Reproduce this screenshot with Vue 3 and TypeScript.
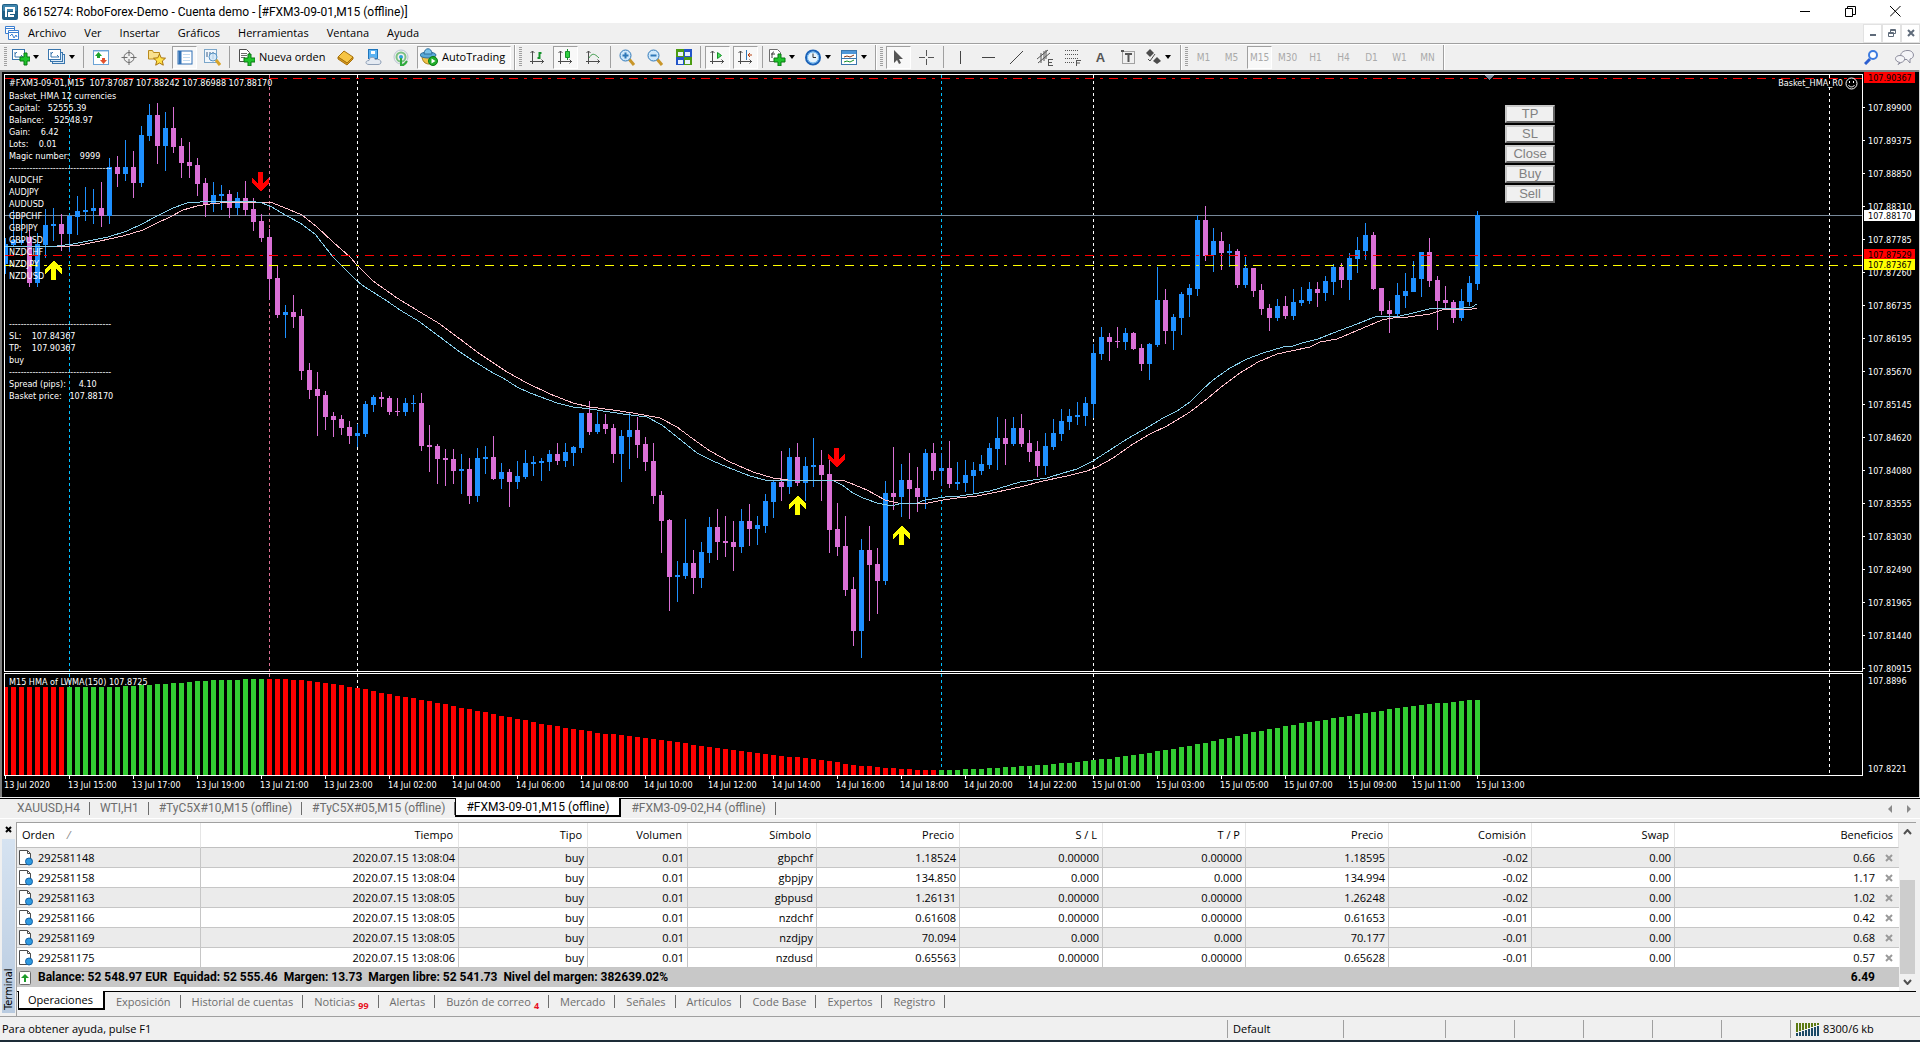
<script setup lang="ts">
interface Candle { x: number; up: boolean; high: number; top: number; bottom: number; low: number }
interface Mark { x: number; y: number; up: boolean }

const STEP = 8
const FIRST = 5

// direction, wick top, body top, body bottom, wick bottom
const candleSource = `
B 238 244 264 274;B 210 240 245 247;B 218 240 243 245;P 230 237 283 287;B 233 244 283 287;B 209 225 245 258;B 208 224 226 241;P 214 224 234 251;
B 215 216 234 252;B 196 211 217 235;B 187 210 212 221;B 189 208 211 224;P 182 208 216 227;B 158 167 216 224;P 156 167 174 187;B 140 167 174 181;
P 151 167 183 198;B 126 135 183 187;B 104 115 136 141;P 103 115 146 164;B 112 128 146 171;P 107 128 147 153;P 138 146 163 178;P 142 162 166 178;
P 158 165 184 196;P 178 183 204 217;B 182 195 204 212;B 185 194 196 210;P 190 194 208 218;B 192 198 208 215;P 181 198 210 216;P 198 209 222 231;
P 214 221 238 242;P 229 237 279 300;P 265 278 315 318;B 305 312 315 338;P 295 312 317 328;P 309 316 371 380;P 363 370 390 399;P 372 389 396 436;
P 391 395 417 430;P 412 416 420 437;P 415 419 428 435;P 421 427 436 444;B 424 433 436 447;B 401 404 434 437;B 395 397 405 412;P 392 397 399 407;
P 396 398 412 415;P 398 411 412 416;B 398 403 412 416;B 395 403 404 412;P 393 403 446 451;P 425 445 447 472;P 444 446 459 484;P 449 458 460 486;
P 449 459 471 484;B 454 469 471 494;P 458 469 496 504;B 448 458 496 502;B 446 457 459 474;P 436 457 479 480;B 463 472 479 489;P 469 472 482 507;
B 461 476 482 489;B 450 463 477 479;B 456 462 464 476;B 458 461 463 481;B 450 454 462 471;P 443 454 461 465;B 443 452 461 467;B 446 447 453 466;
B 413 413 448 453;P 401 413 432 435;B 412 424 432 434;P 414 424 429 434;P 424 428 454 463;B 430 436 454 482;B 413 430 437 469;P 417 430 445 458;
P 437 444 462 471;P 443 461 496 504;P 491 495 521 553;P 519 520 577 611;B 561 575 577 602;B 519 563 576 579;P 550 563 578 594;B 542 552 578 588;
B 517 527 553 563;P 509 527 542 560;P 516 541 543 557;P 521 542 547 571;B 509 521 547 553;P 504 521 529 546;B 516 525 529 545;B 494 501 526 533;
B 481 482 502 518;P 451 482 487 501;B 448 457 487 494;P 443 457 483 486;B 457 466 483 501;B 438 465 467 487;P 450 465 475 501;P 457 474 530 553;
P 503 529 547 556;P 516 546 590 596;P 577 589 631 646;B 539 550 631 658;P 526 550 565 621;P 548 564 581 614;B 481 493 581 585;P 447 493 497 510;
B 464 480 497 517;P 453 480 489 519;P 467 488 497 512;B 449 453 497 509;P 443 453 471 480;B 453 468 471 486;P 441 468 484 488;B 462 482 484 490;
B 460 475 483 492;B 462 470 476 493;B 455 464 471 475;B 443 448 465 469;B 417 438 449 470;P 419 438 444 465;B 417 428 444 446;P 414 428 444 447;
P 430 443 452 462;P 441 451 466 477;B 433 446 466 475;B 419 433 447 450;B 409 421 434 441;B 409 416 422 430;B 402 415 417 425;B 397 403 416 426;
B 344 353 404 418;B 327 337 354 360;P 333 337 342 361;P 327 341 342 348;B 328 333 342 350;P 332 333 349 350;P 344 348 364 371;B 343 344 364 380;
B 267 300 345 347;P 289 300 331 344;B 314 317 331 350;B 292 294 318 335;B 284 288 295 317;B 215 220 289 296;P 206 220 256 261;B 228 241 255 272;
P 232 241 253 270;B 244 251 253 267;P 249 251 285 288;B 257 268 285 288;P 268 268 291 297;P 284 290 309 315;P 304 308 318 331;B 299 306 318 321;
P 296 306 316 319;B 289 302 316 320;B 287 300 303 306;B 282 289 301 304;P 282 289 293 307;B 276 281 293 301;B 264 267 282 295;P 263 267 280 288;
B 253 258 280 300;B 237 250 259 273;B 223 235 251 260;P 232 235 289 290;P 288 288 311 315;P 301 310 314 333;B 283 295 314 316;B 273 291 296 308;
B 261 278 292 292;B 252 252 279 297;P 238 252 281 287;P 276 280 301 330;P 286 300 303 308;P 300 302 318 323;B 289 301 318 321;B 276 283 302 306;
B 211 215 284 290`

const candles: Candle[] = candleSource.trim().split(';').map((row, i) => {
  const [dir, high, top, bottom, low] = row.trim().split(' ')
  return { x: FIRST + i * STEP, up: dir === 'B', high: +high, top: +top, bottom: +bottom, low: +low }
})

const fastLine = '5,246 57,246 73,244 88,241 108,237 127,231 142,224 157,216 173,208 187,203 200,202 215,201 250,201 262,203 272,207 285,215 300,223 315,234 333,257 357,281 365,287 387,301 400,310 420,322 440,337 460,352 472,360 493,373 503,378 517,387 530,393 557,403 573,407 590,409 610,412 623,414 647,417 662,425 677,437 697,453 713,461 727,467 750,476 765,480 832,480 842,485 853,493 863,498 877,503 887,505 895,505 902,503 917,503 925,500 945,497 960,496 973,494 990,491 1000,488 1020,482 1047,478 1063,473 1077,469 1093,461 1110,450 1127,439 1150,426 1163,418 1177,411 1190,402 1202,390 1213,380 1230,368 1247,359 1263,353 1283,347 1293,346 1302,343 1318,339 1333,333 1357,324 1372,318 1378,316 1400,316 1413,313 1433,308 1463,308 1472,307 1477,304'
const slowLine = '5,246 70,246 80,245 100,241 123,236 143,230 157,223 170,217 183,210 197,206 210,204 230,202 270,202 283,207 302,215 317,227 333,242 350,257 357,265 373,281 397,298 420,312 440,324 460,339 480,354 489,360 507,372 527,383 550,394 573,403 590,407 613,410 633,413 660,418 677,427 693,439 710,451 730,462 753,472 773,478 788,480 842,480 850,483 867,490 885,500 898,503 928,503 943,500 957,498 977,496 997,492 1020,487 1043,481 1067,476 1087,471 1097,467 1113,458 1133,444 1150,434 1167,426 1190,412 1208,398 1220,388 1240,373 1258,362 1277,354 1310,347 1320,342 1337,339 1363,328 1382,320 1393,318 1408,317 1430,314 1445,309 1472,309 1477,308'

const histogramTops: number[] = [
  687, 687, 687, 687, 687, 687, 687, 687, 687, 687, 687, 687, 687, 687, 687, 686, 686, 685, 685, 684, 684, 683, 683, 682,
  681, 681, 680, 680, 680, 680, 679, 679, 679, 679, 679, 679, 680, 680, 681, 682, 683, 684, 685, 687, 688, 689, 691, 693,
  694, 696, 697, 698, 700, 701, 703, 704, 706, 708, 709, 711, 712, 714, 716, 717, 719, 720, 722, 724, 725, 726, 728, 729,
  730, 731, 733, 734, 734, 735, 736, 737, 738, 739, 740, 741, 742, 743, 745, 746, 747, 748, 749, 750, 751, 752, 753, 754,
  755, 756, 757, 757, 758, 759, 760, 761, 762, 764, 765, 766, 766, 767, 768, 768, 769, 769, 770, 770, 770, 770, 770, 770,
  769, 769, 769, 768, 768, 767, 767, 766, 766, 765, 765, 764, 763, 763, 762, 761, 760, 759, 759, 757, 756, 755, 754, 753,
  751, 750, 749, 747, 746, 744, 743, 741, 739, 738, 736, 734, 732, 731, 729, 728, 726, 725, 723, 722, 721, 720, 718, 717,
  716, 714, 713, 712, 711, 709, 708, 707, 706, 705, 704, 703, 703, 702, 701, 700, 700,
]
const histogram = histogramTops.map((y, i) => ({
  x: FIRST + i * STEP - 2,
  y,
  rising: (i >= 8 && i <= 32) || i >= 117,
}))

const separators = [
  { x: 69, color: '#00bfff' }, { x: 269, color: '#db7093' }, { x: 357, color: '#ffffff' },
  { x: 941, color: '#00bfff' }, { x: 1093, color: '#ffffff' }, { x: 1829, color: '#ffffff' },
]
const marks: Mark[] = [
  { x: 260, y: 191, up: false }, { x: 53, y: 261, up: true }, { x: 797, y: 496, up: true },
  { x: 836, y: 467, up: false }, { x: 901, y: 526, up: true },
]

const times = ['13 Jul 2020', '13 Jul 15:00', '13 Jul 17:00', '13 Jul 19:00', '13 Jul 21:00', '13 Jul 23:00',
  '14 Jul 02:00', '14 Jul 04:00', '14 Jul 06:00', '14 Jul 08:00', '14 Jul 10:00', '14 Jul 12:00', '14 Jul 14:00',
  '14 Jul 16:00', '14 Jul 18:00', '14 Jul 20:00', '14 Jul 22:00', '15 Jul 01:00', '15 Jul 03:00', '15 Jul 05:00',
  '15 Jul 07:00', '15 Jul 09:00', '15 Jul 11:00', '15 Jul 13:00']
const prices = ['89900', '89375', '88850', '88310', '87785', '87260', '86735', '86195', '85670', '85145', '84620',
  '84080', '83555', '83030', '82490', '81965', '81440', '80915'].map((p, i) => ({ label: `107.${p}`, y: 107 + i * 33 }))
const levels = [
  { label: '107.90367', y: 78, fill: '#ff0000' },
  { label: '107.88170', y: 216, fill: '#ffffff' },
  { label: '107.87529', y: 255, fill: '#ff0000' },
  { label: '107.87367', y: 265, fill: '#ffff00' },
]

const dashes = '-'.repeat(35)
const comment = ['Basket_HMA 12 currencies', 'Capital:   52555.39', 'Balance:    52548.97', 'Gain:    6.42', 'Lots:    0.01',
  'Magic number:    9999', dashes, 'AUDCHF', 'AUDJPY', 'AUDUSD', 'GBPCHF', 'GBPJPY', 'GBPUSD', 'NZDCHF', 'NZDJPY', 'NZDUSD',
  '', '', '', dashes, 'SL:    107.84367', 'TP:    107.90367', 'buy', dashes, 'Spread (pips):     4.10', 'Basket price:   107.88170',
].join('\n')

const menus = ['Archivo', 'Ver', 'Insertar', 'Gráficos', 'Herramientas', 'Ventana', 'Ayuda']
const frames = ['M1', 'M5', 'M15', 'M30', 'H1', 'H4', 'D1', 'W1', 'MN']
const panelButtons = ['TP', 'SL', 'Close', 'Buy', 'Sell']
const chartTabs = ['XAUUSD,H4', 'WTI,H1', '#TyC5X#10,M15 (offline)', '#TyC5X#05,M15 (offline)', '#FXM3-09-01,M15 (offline)', '#FXM3-09-02,H4 (offline)']
const terminalTabs: { name: string; badge?: string }[] = [
  { name: 'Operaciones' }, { name: 'Exposición' }, { name: 'Historial de cuentas' }, { name: 'Noticias', badge: '99' },
  { name: 'Alertas' }, { name: 'Buzón de correo', badge: '4' }, { name: 'Mercado' }, { name: 'Señales' },
  { name: 'Artículos' }, { name: 'Code Base' }, { name: 'Expertos' }, { name: 'Registro' },
]

const columns = ['Orden', 'Tiempo', 'Tipo', 'Volumen', 'Símbolo', 'Precio', 'S / L', 'T / P', 'Precio', 'Comisión', 'Swap', 'Beneficios']
const orders: string[][] = [
  ['292581148', '2020.07.15 13:08:04', 'buy', '0.01', 'gbpchf', '1.18524', '0.00000', '0.00000', '1.18595', '-0.02', '0.00', '0.66'],
  ['292581158', '2020.07.15 13:08:04', 'buy', '0.01', 'gbpjpy', '134.850', '0.000', '0.000', '134.994', '-0.02', '0.00', '1.17'],
  ['292581163', '2020.07.15 13:08:05', 'buy', '0.01', 'gbpusd', '1.26131', '0.00000', '0.00000', '1.26248', '-0.02', '0.00', '1.02'],
  ['292581166', '2020.07.15 13:08:05', 'buy', '0.01', 'nzdchf', '0.61608', '0.00000', '0.00000', '0.61653', '-0.01', '0.00', '0.42'],
  ['292581169', '2020.07.15 13:08:05', 'buy', '0.01', 'nzdjpy', '70.094', '0.000', '0.000', '70.177', '-0.01', '0.00', '0.68'],
  ['292581175', '2020.07.15 13:08:06', 'buy', '0.01', 'nzdusd', '0.65563', '0.00000', '0.00000', '0.65628', '-0.01', '0.00', '0.57'],
]
</script>

<template>
  <div class="app">
    <header class="titlebar">
      <svg class="logo" width="16" height="16" viewBox="0 0 16 16"><rect width="16" height="16" rx="2" fill="#1f5f86" /><rect x="1" y="1" width="14" height="6" rx="1" fill="#3f86ae" /><path d="M4 13V4h8v5H7v3h5" fill="none" stroke="#fff" stroke-width="2" /></svg>
      <h1>8615274: RoboForex-Demo - Cuenta demo - [#FXM3-09-01,M15 (offline)]</h1>
      <div class="window-buttons">
        <button aria-label="Minimizar"><svg width="11" height="11"><path d="M0 5.5h10" stroke="#000" /></svg></button>
        <button aria-label="Restaurar"><svg width="11" height="11" fill="none" stroke="#000"><path d="M.5 2.5h7v8h-7z" /><path d="M2.5 2.5v-2h8v8h-3" /></svg></button>
        <button aria-label="Cerrar"><svg width="11" height="11"><path d="M0 0l10.500 10.500M10.500 0L0 10.500" stroke="#000" /></svg></button>
      </div>
    </header>

    <nav class="menubar">
      <svg width="16" height="16" fill="none" stroke="#3c7fd0"><path d="M1.500 1.500h9v7h-9zM1.500 3.500h9" fill="#fff" /><path d="M4.500 5.500h10v9h-10zM4.500 7.500h10" fill="#fff" /><path d="M6 11l2-2 2 4 2-3 1 2" /></svg>
      <button v-for="m in menus" :key="m">{{ m }}</button>
      <div class="mdi-buttons">
        <button aria-label="Minimizar gráfico"><svg width="8" height="8"><path d="M1 6h6" stroke="#5f6b7a" stroke-width="2" /></svg></button>
        <button aria-label="Restaurar gráfico"><svg width="8" height="8" fill="none" stroke="#5f6b7a"><path d="M.5 3.500h5v4h-5zM.5 4.500h5M2.500 3V.5h5v4H6M2.500 1.500h5" /></svg></button>
        <button aria-label="Cerrar gráfico"><svg width="8" height="8"><path d="M1 1l6 6M7 1L1 7" stroke="#5f6b7a" stroke-width="2" /></svg></button>
      </div>
    </nav>

    <div class="toolbar">
      <i class="grip"></i>
      <button class="drop" aria-label="Nuevo gráfico"><svg width="18" height="18"><rect x=".5" y="1.500" width="12" height="10" fill="#fff" stroke="#3a76ad" /><path d="M3 4v5h8M5 4l-2 2m8 3l-2-2" stroke="#3a76ad" fill="none" /><path d="M8 9h4V5h3v4h3v4h-3v4h-3v-4H8z" fill="#1fc42b" stroke="#087812" /></svg><b></b></button>
      <button class="drop" aria-label="Perfiles"><svg width="18" height="18" fill="#dcebf8" stroke="#3a76ad"><rect x="4.500" y="6.500" width="12" height="9" /><rect x="2.500" y="4.500" width="12" height="9" /><rect x=".5" y="1.500" width="12" height="10" fill="#fff" /><path d="M3 4v5h8M5 4L3 6m8 3L9 7" fill="none" /></svg><b></b></button>
      <i class="sep"></i>
      <button aria-label="Observación de mercado"><svg width="16" height="17"><rect x=".5" y="1.500" width="15" height="14" fill="#fff" stroke="#6ba3d6" /><path d="M1 2.500h14" stroke="#bcd8f0" /><path d="M5.500 3l3.500 4H7v2H4V7H2z" fill="#1da32a" /><path d="M10.500 15l3.500-4h-2V9H9v2H7z" fill="#e2512c" /></svg></button>
      <button aria-label="Ventana de datos"><svg width="16" height="17" fill="none" stroke="#6d6d6d"><circle cx="8" cy="8.500" r="5" /><path d="M8 1v6m0 3v6M.5 8.500h6m3 0h6" /></svg></button>
      <button aria-label="Navegador"><svg width="18" height="17"><path d="M.5 10V1.500h4l1 2h6v6.500z" fill="#f9e08e" stroke="#b98a1c" /><path d="M11.500 5l1.700 3.800 4.300.4-3.200 2.800 1 4.200-3.800-2.200-3.800 2.200 1-4.200-3.200-2.800 4.300-.4z" fill="#ffe14a" stroke="#a8720c" /></svg></button>
      <button class="pressed" aria-label="Terminal"><svg width="16" height="15"><rect x="1" y="1" width="14" height="13" fill="#fff" stroke="#2e6fb4" stroke-width="1" /><path d="M3 1v13" stroke="#2e6fb4" stroke-width="3" /><path d="M6 4.500h7M6 7.500h7M6 10.500h7" stroke="#c3dbef" /></svg></button>
      <button aria-label="Probador de estrategias"><svg width="17" height="17"><rect x=".5" y=".5" width="12" height="13" fill="#f2f7fc" stroke="#7ba6c9" /><path d="M3 3v5m3-5v3m3-3v7" stroke="#3a5f86" /><circle cx="9" cy="8" r="4" fill="#cfe6f8" fill-opacity=".8" stroke="#5693c4" /><path d="M12 11l4 5" stroke="#d8a42b" stroke-width="3" /></svg></button>
      <i class="sep"></i>
      <button class="wide order"><svg width="16" height="18"><path d="M.5 1.500h7l3 3v9H.5z" fill="#fff" stroke="#4c4c4c" /><path d="M2 5.500h6M2 7.500h6M2 9.500h4" stroke="#6d6d6d" /><path d="M5 10h4V6h3v4h4v4h-4v4H9v-4H5z" fill="#1fc42b" stroke="#087812" /></svg>Nueva orden</button>
      <button aria-label="MetaEditor"><svg width="17" height="17"><path d="M1 8l6-6 9 6-6 6z" fill="#f6c545" stroke="#a8720c" /><path d="M1 8v2l9 6 6-6V8l-6 6z" fill="#d99a1d" stroke="#a8720c" /></svg></button>
      <button aria-label="Nube"><svg width="17" height="17"><rect x="3.500" y=".5" width="9" height="9" fill="#5ab2f2" stroke="#1f75bb" /><path d="M6 2h4v3H6z" fill="#fff" /><path d="M4 15.500c-4 0-4-4 0-4 0-4 6-4 6-1 4-1 6 1 6 2.500s-1 2.500-3 2.500z" fill="#e4eaf2" stroke="#8e9fb6" /></svg></button>
      <button aria-label="Señales"><svg width="17" height="17" fill="none"><circle cx="8" cy="8" r="7" stroke="#b9c6d3" /><circle cx="8" cy="8" r="4.500" stroke="#7cc284" stroke-width="2" /><circle cx="8" cy="8" r="2" fill="#2e9fd8" /><path d="M8 9v8c4-1 5-3 6-5" stroke="#2faa3c" stroke-width="2" /></svg></button>
      <button class="wide auto pressed"><svg width="18" height="18"><path d="M2 8c0 5 3 8 7 8s6-4 6-8z" fill="#f0c34a" stroke="#a67b16" /><ellipse cx="8" cy="7" rx="8" ry="3" fill="#58a9d8" stroke="#2f6f9c" /><path d="M4 6c0-7 8-7 8 0z" fill="#7cc3ea" stroke="#2f6f9c" /><circle cx="13" cy="13" r="4.500" fill="#1fae2b" stroke="#0c7a16" /><path d="M11.500 10.500v5l4-2.500z" fill="#fff" /></svg>AutoTrading</button>
      <i class="edge"></i><i class="grip"></i>
      <button aria-label="Barras"><svg width="15" height="16" fill="none" stroke="#4c4c4c"><path d="M2.500 2v13M0 12.500h14M.5 4l2-2 2 2m7 6.500l2 2-2 2" /><path d="M9.500 3v7M9.500 4h2m-4 5h2" stroke="#15912a" stroke-width="2" /></svg></button>
      <button class="pressed" aria-label="Velas"><svg width="15" height="16" fill="none" stroke="#4c4c4c"><path d="M2.500 2v13M0 12.500h14M.5 4l2-2 2 2m7 6.500l2 2-2 2" /><path d="M9.500 0v11" stroke="#15912a" /><path d="M7.500 2.500h4v6h-4z" fill="#2fd03f" stroke="#15912a" /></svg></button>
      <button aria-label="Líneas"><svg width="15" height="16" fill="none" stroke="#4c4c4c"><path d="M2.500 2v13M0 12.500h14M.5 4l2-2 2 2m7 6.500l2 2-2 2" /><path d="M3 9c3-5 5-5 10 0" stroke="#3d9a4a" /></svg></button>
      <i class="sep"></i>
      <button aria-label="Acercar"><svg width="17" height="17"><path d="M10 10l5 6" stroke="#c8962a" stroke-width="3" /><circle cx="6.500" cy="6.500" r="5.500" fill="#cfe8fb" stroke="#2f78b8" /><path d="M3.500 6.500h6m-3-3v6" stroke="#2f78b8" stroke-width="2" /></svg></button>
      <button aria-label="Alejar"><svg width="17" height="17"><path d="M10 10l5 6" stroke="#c8962a" stroke-width="3" /><circle cx="6.500" cy="6.500" r="5.500" fill="#cfe8fb" stroke="#2f78b8" /><path d="M3.500 6.500h6" stroke="#2f78b8" stroke-width="2" /></svg></button>
      <button aria-label="Mosaico"><svg width="16" height="16"><path d="M0 0h8v8H0zM8 8h8v8H8z" fill="#4c9c12" /><path d="M8 0h8v8H8zM0 8h8v8H0z" fill="#2355c8" /><path d="M2 3h5v4H2zM9 3h5v4H9zM2 11h5v4H2zM9 11h5v4H9z" fill="#e9f2ff" /></svg></button>
      <i class="sep"></i>
      <button class="pressed" aria-label="Desplazamiento"><svg width="15" height="16" fill="none" stroke="#4c4c4c"><path d="M2.500 2v13M0 12.500h14M.5 4l2-2 2 2m7 6.500l2 2-2 2" /><path d="M7.500 3.500v6l4-3z" fill="#4fe05c" stroke="#15912a" /></svg></button>
      <button class="pressed" aria-label="Desplazar gráfico"><svg width="15" height="16" fill="none" stroke="#4c4c4c"><path d="M2.500 2v13M0 12.500h14M.5 4l2-2 2 2m7 6.500l2 2-2 2" /><path d="M8.500 1v10" stroke="#2f78b8" /><path d="M14 6h-4m2-2l-2 2 2 2" stroke="#b8410f" /></svg></button>
      <i class="sep"></i>
      <button class="drop" aria-label="Indicadores"><svg width="17" height="18"><path d="M.5 1.500h8l3 3v9H.5z" fill="#fff" stroke="#6d6d6d" /><path d="M5 4c-2 0-2 2-2 6m-1-4h4" stroke="#333" fill="none" /><path d="M5 10h4V6h3v4h4v4h-4v4H9v-4H5z" fill="#1fc42b" stroke="#087812" /></svg><b></b></button>
      <button class="drop" aria-label="Períodos"><svg width="17" height="17"><circle cx="8" cy="8.500" r="7" fill="#e6f3fd" stroke="#1a62b8" stroke-width="2" /><circle cx="8" cy="8.500" r="5.500" fill="none" stroke="#63b0ee" /><path d="M8 4.500v4h3" stroke="#333" fill="none" /></svg><b></b></button>
      <button class="drop" aria-label="Plantillas"><svg width="17" height="17"><rect x=".5" y="1.500" width="15" height="14" fill="#fff" stroke="#3a76ad" /><path d="M1 3.500h14" stroke="#4f97d8" stroke-width="3" /><path d="M3 8l3-1 3 1 4-2" stroke="#8a3a16" fill="none" /><path d="M1 9.500h14" stroke="#3a76ad" /><path d="M3 13l3-1 3 1 4-2" stroke="#15912a" fill="none" /></svg><b></b></button>
      <i class="edge"></i><i class="grip"></i>
      <button class="pressed" aria-label="Cursor"><svg width="11" height="15"><path d="M1 0l9 9H6l2 4-2 1-2-4-3 3z" fill="#555" /></svg></button>
      <button aria-label="Cruz"><svg width="15" height="15" stroke="#555"><path d="M7.500 0v6m0 3v6M0 7.500h6m3 0h6" /></svg></button>
      <i class="sep"></i>
      <button aria-label="Línea vertical"><svg width="15" height="15" stroke="#444"><path d="M7.500 1v13" /></svg></button>
      <button aria-label="Línea horizontal"><svg width="15" height="15" stroke="#444"><path d="M1 7.500h13" /></svg></button>
      <button aria-label="Línea de tendencia"><svg width="15" height="15" stroke="#444"><path d="M1 14L14 1" /></svg></button>
      <button aria-label="Canal equidistante"><svg width="16" height="17" stroke="#555"><path d="M0 10L11 1M1 14L13 4M4 4v10m3-12v10M9 1v9" /><path d="M11 10.500h5M11 13.500h4M11 16.500h5M11.500 10v7" /></svg></button>
      <button aria-label="Fibonacci"><svg width="16" height="17" stroke="#555"><path d="M0 1.500h14M0 5.500h14M0 9.500h14M0 13.500h9" stroke-dasharray="1 1" /><path d="M11 11.500h5M11 14h4M11.500 11v6" /></svg></button>
      <button class="letter" aria-label="Texto">A</button>
      <button aria-label="Etiqueta"><svg width="15" height="16"><rect x="1.500" y="2.500" width="12" height="12" fill="none" stroke="#555" stroke-dasharray="1 1" /><path d="M4 5h7M7.500 5v8" stroke="#555" stroke-width="2" /><path d="M0 1h3v2H0z" fill="#555" /></svg></button>
      <button class="drop" aria-label="Flechas"><svg width="16" height="16" fill="#4c4c4c"><path d="M0 4l4-4 4 4-4 4zM7 12l4-4 4 4-4 3z" /><path d="M2 10l2 2 5-7" fill="none" stroke="#4c4c4c" /></svg><b></b></button>
      <i class="edge"></i><i class="grip"></i>
      <button v-for="f in frames" :key="f" class="frame" :class="{ pressed: f === 'M15' }">{{ f }}</button>
      <i class="edge"></i>
      <div class="tool-end">
        <button aria-label="Buscar"><svg width="15" height="15" fill="none"><path d="M1 14l5-5" stroke="#2b5fd0" stroke-width="3" /><circle cx="9" cy="5" r="4" stroke="#3c7be0" stroke-width="2" fill="#fff" /></svg></button>
        <button aria-label="Chat"><svg width="20" height="15" fill="#f5f5f8" stroke="#8c8c9c"><path d="M11 9.500C5 9 5 1 13 .5s8 8 3 8.500v4l-3-3.500z" /><path d="M6 12.500c-6-1-6-7 0-7s6 6 1 7l-3 2z" /></svg></button>
      </div>
    </div>

    <main class="chart">
      <div class="plot">
        <svg class="canvas" width="100%" height="727" shape-rendering="crispEdges">
          <defs>
            <clipPath id="price-area"><rect x="5" y="75" width="100%" height="596" /></clipPath>
            <clipPath id="sub-area"><rect x="5" y="674" width="100%" height="101" /></clipPath>
          </defs>
          <g transform="translate(0 -70)">
            <g clip-path="url(#price-area)">
              <line v-for="s in separators" :key="s.x" :x1="s.x + .5" :x2="s.x + .5" y1="75" y2="671" :stroke="s.color" stroke-dasharray="3 3" />
              <line x1="5" x2="100%" y1="215.500" y2="215.500" stroke="#778899" />
              <g v-for="c in candles" :key="c.x" :fill="c.up ? '#1e90ff' : '#da70d6'">
                <rect :x="c.x" :y="c.high" width="1" :height="c.low - c.high" />
                <rect :x="c.x - 2" :y="c.top" width="5" :height="c.bottom - c.top" />
              </g>
              <polyline :points="slowLine" fill="none" stroke="#ffc0cb" />
              <polyline :points="fastLine" fill="none" stroke="#87ceeb" />
              <line x1="5" x2="100%" y1="78.500" y2="78.500" stroke="#f00" stroke-dasharray="9 6 3 6" />
              <line x1="5" x2="100%" y1="255.500" y2="255.500" stroke="#f00" stroke-dasharray="9 6 3 6" />
              <line x1="5" x2="100%" y1="265.500" y2="265.500" stroke="#ff0" stroke-dasharray="9 6 3 6" />
              <path d="M1485 75h9l-4 5h-1z" fill="#778899" />
              <path v-for="m in marks" :key="m.x" :transform="`translate(${m.x} ${m.y}) scale(1 ${m.up ? 1 : -1})`" :fill="m.up ? '#ff0' : '#f00'" d="M0 0h1l8 8v5l-6-5v11h-5V8l-6 5V8z" />
            </g>
            <g clip-path="url(#sub-area)">
              <line v-for="s in separators" :key="s.x" :x1="s.x + .5" :x2="s.x + .5" y1="674" y2="775" :stroke="s.color" stroke-dasharray="3 3" />
              <rect v-for="h in histogram" :key="h.x" :x="h.x" :y="h.y" width="5" :height="775 - h.y" :fill="h.rising ? '#32cd32' : '#f00'" />
            </g>
            <path d="M4.500 74v598M4.500 673v103" stroke="#fff" />
            <g stroke="#fff">
              <line x1="4" x2="100%" y1="74.500" y2="74.500" />
              <line x1="4" x2="100%" y1="671.500" y2="671.500" />
              <line x1="4" x2="100%" y1="673.500" y2="673.500" />
              <line x1="4" x2="100%" y1="775.500" y2="775.500" />
              <line v-for="(t, i) in times" :key="t" :x1="5.5 + i * 64" :x2="5.5 + i * 64" y1="776" y2="779" />
            </g>
          </g>
          <text v-for="(t, i) in times" :key="t" :x="4 + i * 64" y="718">{{ t }}</text>
        </svg>
        <p class="chart-title">#FXM3-09-01,M15&nbsp; 107.87087 107.88242 107.86988 107.88170</p>
        <p class="comment">{{ comment }}</p>
        <p class="expert">Basket_HMA_R0
          <svg width="13" height="13" fill="none" stroke="#fff"><circle cx="6.500" cy="6.500" r="5.500" /><path d="M3.500 8c1 2.500 5 2.500 6 0M4.500 4v2m4-2v2" /></svg>
        </p>
        <p class="sub-title">M15 HMA of LWMA(150) 107.8725</p>
        <div class="trade-panel"><button v-for="b in panelButtons" :key="b">{{ b }}</button></div>
      </div>
      <svg class="scale" width="57" height="727" shape-rendering="crispEdges">
        <g transform="translate(0 -70)">
          <path d="M.5 74v598M.5 673v103" stroke="#fff" />
          <template v-for="p in prices" :key="p.label">
            <path :d="`M0 ${p.y}.5h3`" stroke="#fff" />
            <text x="6" :y="p.y + 4">{{ p.label }}</text>
          </template>
          <text x="6" y="684">107.8896</text>
          <text x="6" y="772">107.8221</text>
          <template v-for="l in levels" :key="l.label">
            <rect x="2" :y="l.y - 6" width="51" height="11" :fill="l.fill" />
            <text x="6" :y="l.y + 3" class="dark">{{ l.label }}</text>
          </template>
        </g>
      </svg>
    </main>

    <div class="tabs chart-tabs">
      <button v-for="t in chartTabs" :key="t" :class="{ active: t.startsWith('#FXM3-09-01') }">{{ t }}</button>
      <span class="tab-arrows"><i class="left"></i><i class="right"></i></span>
    </div>

    <section class="terminal">
      <aside class="strip">
        <button aria-label="Cerrar terminal"><svg width="7" height="7"><path d="M1 1l5 5M6 1L1 6" stroke="#000" stroke-width="2" /></svg></button>
        <span>Terminal</span>
      </aside>
      <div class="terminal-body">
        <div class="sheet">
          <table>
            <colgroup><col class="c-order"><col class="c-time"><col class="c-type"><col class="c-volume"><col class="c-type"><col v-for="n in 6" :key="n" class="c-price"><col></colgroup>
            <thead>
              <tr><th v-for="(c, i) in columns" :key="i">{{ c }}<em v-if="i === 0">/</em></th></tr>
            </thead>
            <tbody>
              <tr v-for="o in orders" :key="o[0]">
                <td v-for="(v, i) in o" :key="i">
                  <svg v-if="i === 0" width="15" height="17"><path d="M.5 1.500h8l3 3v11H.5z" fill="#fff" stroke="#4c4c4c" /><path d="M8.500 1.500v3h3" fill="none" stroke="#4c4c4c" /><circle cx="10" cy="12.500" r="3.500" fill="#2f9ae0" stroke="#1561a5" /></svg>{{ v }}<button v-if="i === 11" aria-label="Cerrar orden"><svg width="8" height="8"><path d="M1 1l6 6M7 1L1 7" stroke="#9a9a9a" stroke-width="2" /></svg></button>
                </td>
              </tr>
            </tbody>
            <tfoot>
              <tr>
                <td colspan="11"><svg width="12" height="14"><rect x=".5" y=".5" width="11" height="13" rx="1" fill="#fff" stroke="#6d6d6d" /><path d="M6 3l4 4H7v4H5V7H2z" fill="#1c9c2a" /></svg>Balance: 52 548.97 EUR&nbsp; Equidad: 52 555.46&nbsp; Margen: 13.73&nbsp; Margen libre: 52 541.73&nbsp; Nivel del margen: 382639.02%</td>
                <td>6.49</td>
              </tr>
            </tfoot>
          </table>
          <div class="scrollbar">
            <svg width="9" height="6"><path d="M1 5l3.500-4L8 5" fill="none" stroke="#505050" stroke-width="2" /></svg>
            <i></i>
            <svg width="9" height="6"><path d="M1 1l3.500 4L8 1" fill="none" stroke="#505050" stroke-width="2" /></svg>
          </div>
        </div>
        <div class="tabs terminal-tabs">
          <button v-for="t in terminalTabs" :key="t.name" :class="{ active: t.name === 'Operaciones' }">{{ t.name }}<sub v-if="t.badge">{{ t.badge }}</sub></button>
        </div>
      </div>
    </section>

    <footer class="status">
      <span class="help">Para obtener ayuda, pulse F1</span>
      <span class="profile">Default</span>
      <span class="s-a"></span><span class="s-b"></span><span class="s-b"></span><span class="s-b"></span><span class="s-b"></span><span class="s-b"></span>
      <span class="net"><svg width="24" height="13"><g v-for="n in 8" :key="n"><rect :x="(n - 1) * 3" y="0" width="2" height="13" fill="#5c7a12" /><rect :x="(n - 1) * 3" :y="10 - n" width="2" height="1" fill="#f0f0f0" /><rect :x="(n - 1) * 3" :y="11 - n" width="2" :height="n + 2" fill="#1c4a66" /></g></svg>8300/6 kb</span>
    </footer>
  </div>
</template>

<style>
body { margin: 0; background: #f0f0f0; }
</style>

<style scoped>
.app { font: 12px/16px "Open Sans", "Noto Sans", sans-serif; color: #000; background: #f0f0f0; border-bottom: 2px solid #1d2c38; }
button { font: inherit; color: inherit; border: 0; padding: 0; margin: 0; background: none; }
svg { flex: none; display: block; }
p, h1 { margin: 0; }

.titlebar { display: flex; align-items: center; height: 23px; background: #fff; padding-left: 2px; gap: 5px; box-sizing: border-box; }
h1 { font: 400 12px/16px Roboto, "Open Sans", sans-serif; }
.window-buttons { display: flex; margin: 0 2px 0 auto; }
.window-buttons button { width: 45px; display: flex; justify-content: center; }

.menubar { display: flex; align-items: center; height: 20px; padding-left: 4px; font-size: 11px; }
.menubar > svg { margin-right: 8px; }
.menubar > button { margin-right: 18px; }
.mdi-buttons { display: flex; gap: 2px; margin: 0 1px 0 auto; }
.mdi-buttons button { width: 17px; height: 17px; background: #fff; display: flex; align-items: center; justify-content: center; box-shadow: 0 0 0 1px #e2e2e2; }

.toolbar { display: flex; align-items: center; gap: 3px; height: 27px; padding-left: 4px; box-sizing: border-box; border-top: 1px solid #a0a0a0; box-shadow: inset 0 1px #fff; font-size: 11px; }
.toolbar button { width: 25px; height: 23px; flex: none; display: flex; align-items: center; justify-content: center; box-sizing: border-box; }
.toolbar .drop { width: 33px; justify-content: flex-start; padding-left: 2px; gap: 3px; }
.drop b { border: 3px solid transparent; border-top: 4px solid #000; border-bottom: 0; }
.toolbar .wide { justify-content: flex-start; gap: 4px; padding-left: 5px; white-space: nowrap; }
.toolbar .order { width: 96px; }
.toolbar .auto { width: 94px; padding-left: 2px; }
.toolbar .pressed { background: #f8f8f8; border: 1px solid #a0a0a0; border-right-color: #fff; border-bottom-color: #fff; }
.toolbar .letter { font: bold 13px "Liberation Sans", sans-serif; color: #555; }
.toolbar .frame { font: 10px "DejaVu Sans Condensed", "DejaVu Sans", sans-serif; color: #a9a9a9; }
.grip { width: 3px; height: 20px; background: repeating-linear-gradient(#a0a0a0 0 1px, #f0f0f0 1px 2px); }
.sep { width: 3px; height: 22px; background: linear-gradient(90deg, transparent 1px, #a0a0a0 1px 2px, transparent 2px); }
.edge { width: 2px; height: 25px; background: linear-gradient(90deg, #a0a0a0 1px, #fff 1px); }
.tool-end { display: flex; margin: 0 4px 0 auto; gap: 7px; }

.chart { display: flex; height: 727px; background: #000; border-right: 1px solid #d0d0d0; position: relative; font: 9px/12px "DejaVu Sans Condensed", "DejaVu Sans", sans-serif; color: #fff; box-shadow: inset 2px 2px #808080; }
.plot { flex: 1; min-width: 0; position: relative; }
.chart text { fill: #fff; }
.chart text.dark { fill: #000; }
.chart-title, .comment, .expert, .sub-title, .trade-panel { position: absolute; left: 9px; white-space: pre; }
.chart-title { top: 7px; }
.comment { top: 20px; }
.sub-title { top: 606px; }
.expert { left: auto; right: 4px; top: 7px; display: flex; gap: 2px; white-space: nowrap; }
.trade-panel { left: 1505px; top: 35px; display: flex; flex-direction: column; gap: 2px; }
.trade-panel button { width: 50px; height: 18px; box-sizing: border-box; background: #f0f0f0; border: 2px solid #c8c8c8; border-right-color: #646464; border-bottom-color: #646464; color: #808080; font: 13px/14px "Liberation Sans", sans-serif; }

.tabs { display: flex; color: #6d6d6d; font-size: 11px; border-top: 1px solid #000; }
.tabs button { position: relative; padding: 0 10px; height: 18px; line-height: 16px; white-space: nowrap; }
.tabs button:not(.active)::after { content: ""; position: absolute; right: 0; top: 3px; height: 13px; border-right: 1px solid #6d6d6d; }
.tabs .active { background: #fff; color: #000; border: solid #000; border-width: 0 2px 2px 1px; margin-top: -1px; height: 19px; }
.chart-tabs { margin-top: 1px; padding-left: 7px; height: 19px; border-bottom: 1px solid #fff; font-family: Roboto, "Open Sans", sans-serif; font-size: 12px; }
.tab-arrows { margin-left: auto; display: flex; gap: 15px; align-items: center; padding-right: 9px; }
.tab-arrows i { border: 4px solid transparent; border-width: 4px 0; }
.tab-arrows .left { border-right: 4px solid #8a8a8a; }
.tab-arrows .right { border-left: 4px solid #8a8a8a; }

.terminal { display: flex; padding: 3px 4px 0 0; border-bottom: 1px solid #a0a0a0; height: 194px; font-size: 11px; }
.strip { width: 16px; display: flex; flex-direction: column; align-items: center; gap: 5px; padding-top: 2px; box-sizing: border-box; }
.strip button { height: 10px; }
.strip span { flex: 1; width: 13px; writing-mode: vertical-rl; transform: rotate(180deg); background: linear-gradient(#b9cbe0, #d6e3f1); margin-bottom: 3px; padding-top: 3px; box-sizing: border-box; font: 11px/13px "DejaVu Sans Condensed", "DejaVu Sans", sans-serif; }
.terminal-body { flex: 1; min-width: 0; border-left: 1px solid #a0a0a0; border-top: 1px solid #a0a0a0; }
.sheet { display: flex; background: #fff; height: 168px; }
table { flex: 1; min-width: 0; width: 100%; height: 164px; table-layout: fixed; border-spacing: 0; }
.c-order { width: 184px; } .c-time { width: 258px; } .c-type { width: 129px; } .c-volume { width: 100px; } .c-price { width: 143px; }
th { height: 25px; box-sizing: border-box; padding: 0 5px; font-weight: 400; text-align: right; border-right: 1px solid #e5e5e5; border-bottom: 1px solid #c0c0c0; }
th:first-child { text-align: left; }
th em { margin-left: 12px; color: #8a8a8a; }
td { height: 20px; line-height: 17px; box-sizing: border-box; padding: 0 3px 1px; text-align: right; border-right: 1px solid #c6c6c6; border-bottom: 1px solid #c6c6c6; white-space: nowrap; }
td:first-child { text-align: left; padding-left: 2px; }
td svg { display: inline-block; vertical-align: top; margin: 0 4px 0 0; }
td:last-child { border-right: 0; padding-right: 6px; }
td button { vertical-align: top; height: 17px; }
td button svg { margin: 5px 0 0 10px; }
tbody tr:nth-child(odd) { background: #ebebeb; }
tfoot td { height: 19px; background: #c8c8c8; border: 0; font: 700 12px/17px Roboto, "Open Sans", sans-serif; }
tfoot td:last-child { padding-right: 24px; }
tfoot td svg { margin: 2px 7px 0 0; }
.scrollbar { width: 17px; display: flex; flex-direction: column; align-items: center; background: #f0f0f0; padding: 6px 0; box-sizing: border-box; }
.scrollbar i { width: 15px; height: 94px; margin: auto 0 5px; background: #cdcdcd; }
.terminal-tabs { padding-left: 1px; }
.terminal-tabs button { padding: 0 10px 0 11px; height: 20px; line-height: 18px; }
.terminal-tabs .active { padding-left: 9px; }
.terminal-tabs sub { color: #e81123; font-weight: 700; font-size: 9px; line-height: 0; margin-left: 3px; }

.status { display: flex; align-items: center; height: 22px; margin-top: 1px; font-size: 11px; }
.status span { height: 18px; line-height: 18px; border-left: 1px solid #a0a0a0; box-sizing: border-box; }
.status .help { flex: 1; border: 0; padding-left: 2px; }
.profile { width: 116px; padding-left: 5px; }
.s-a { width: 102px; } .s-b { width: 69px; }
.net { width: 130px; padding-left: 5px; display: flex; align-items: center; gap: 3px; }
</style>
